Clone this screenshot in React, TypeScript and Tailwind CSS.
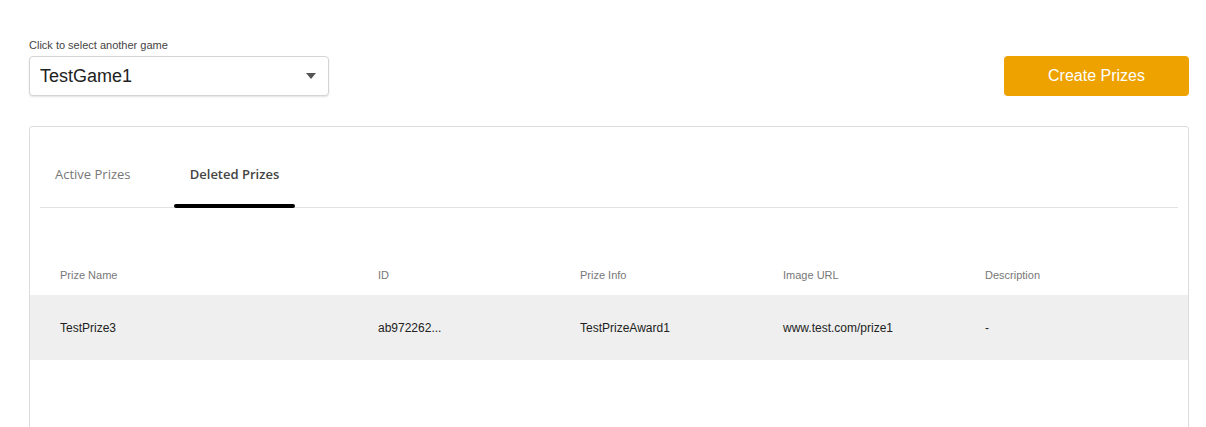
const columns = ["Prize Name", "ID", "Prize Info", "Image URL", "Description"];

const rows = [
  {
    id: "ab972262...",
    name: "TestPrize3",
    info: "TestPrizeAward1",
    url: "www.test.com/prize1",
    description: "-",
  },
];

const gridCols = "grid grid-cols-[318px_202px_203px_202px_1fr] pl-[30px]";

export default function App() {
  return (
    <div className="min-h-screen bg-white pl-[29px] pr-[17px] pt-[38px] font-['Liberation_Sans',Arial,sans-serif]">
      <div className="flex items-end justify-between">
        <div>
          <div className="text-[11px] leading-[14px] text-[#444]">Click to select another game</div>
          <button
            type="button"
            className="mt-[4px] flex h-[40px] w-[300px] items-center justify-between rounded-[4px] border border-[#d5d5d5] bg-white pl-[10px] pr-[10px] shadow-[0_1px_2px_rgba(0,0,0,0.12)]"
          >
            <span className="text-[18px] text-[#222]">TestGame1</span>
            <svg width="12" height="6" viewBox="0 0 12 6" className="mr-[1px]">
              <path d="M1 0h10L6 6z" fill="#555" />
            </svg>
          </button>
        </div>
        <button
          type="button"
          className="h-[40px] w-[185px] rounded-[4px] bg-[#eda200] text-[16px] text-white"
        >
          Create Prizes
        </button>
      </div>

      <div className="mt-[30px] h-[320px] rounded-[3px] border border-[#dcdcdc]">
        <div className="mx-[10px] mt-[16px] flex border-b border-[#e2e2e2] font-['Open_Sans',sans-serif] text-[13px]">
          <div className="flex h-[64px] w-[134px] items-center pl-[15px] text-[#777]">Active Prizes</div>
          <div className="relative flex h-[64px] w-[121px] items-center justify-center font-semibold text-[#444]">
            Deleted Prizes
            <span className="absolute bottom-[-1px] left-0 h-[4px] w-full rounded-full bg-black" />
          </div>
        </div>

        <div className="mt-[47px]">
          <div className={`${gridCols} h-[40px] items-center text-[11px] text-[#777]`}>
            {columns.map((c) => (
              <div key={c}>{c}</div>
            ))}
          </div>
          {rows.map((r) => (
            <div key={r.id} className={`${gridCols} h-[65px] items-center bg-[#efefef] text-[12px] text-[#222]`}>
              <div>{r.name}</div>
              <div>{r.id}</div>
              <div>{r.info}</div>
              <div>{r.url}</div>
              <div>{r.description}</div>
            </div>
          ))}
        </div>
      </div>
    </div>
  );
}
